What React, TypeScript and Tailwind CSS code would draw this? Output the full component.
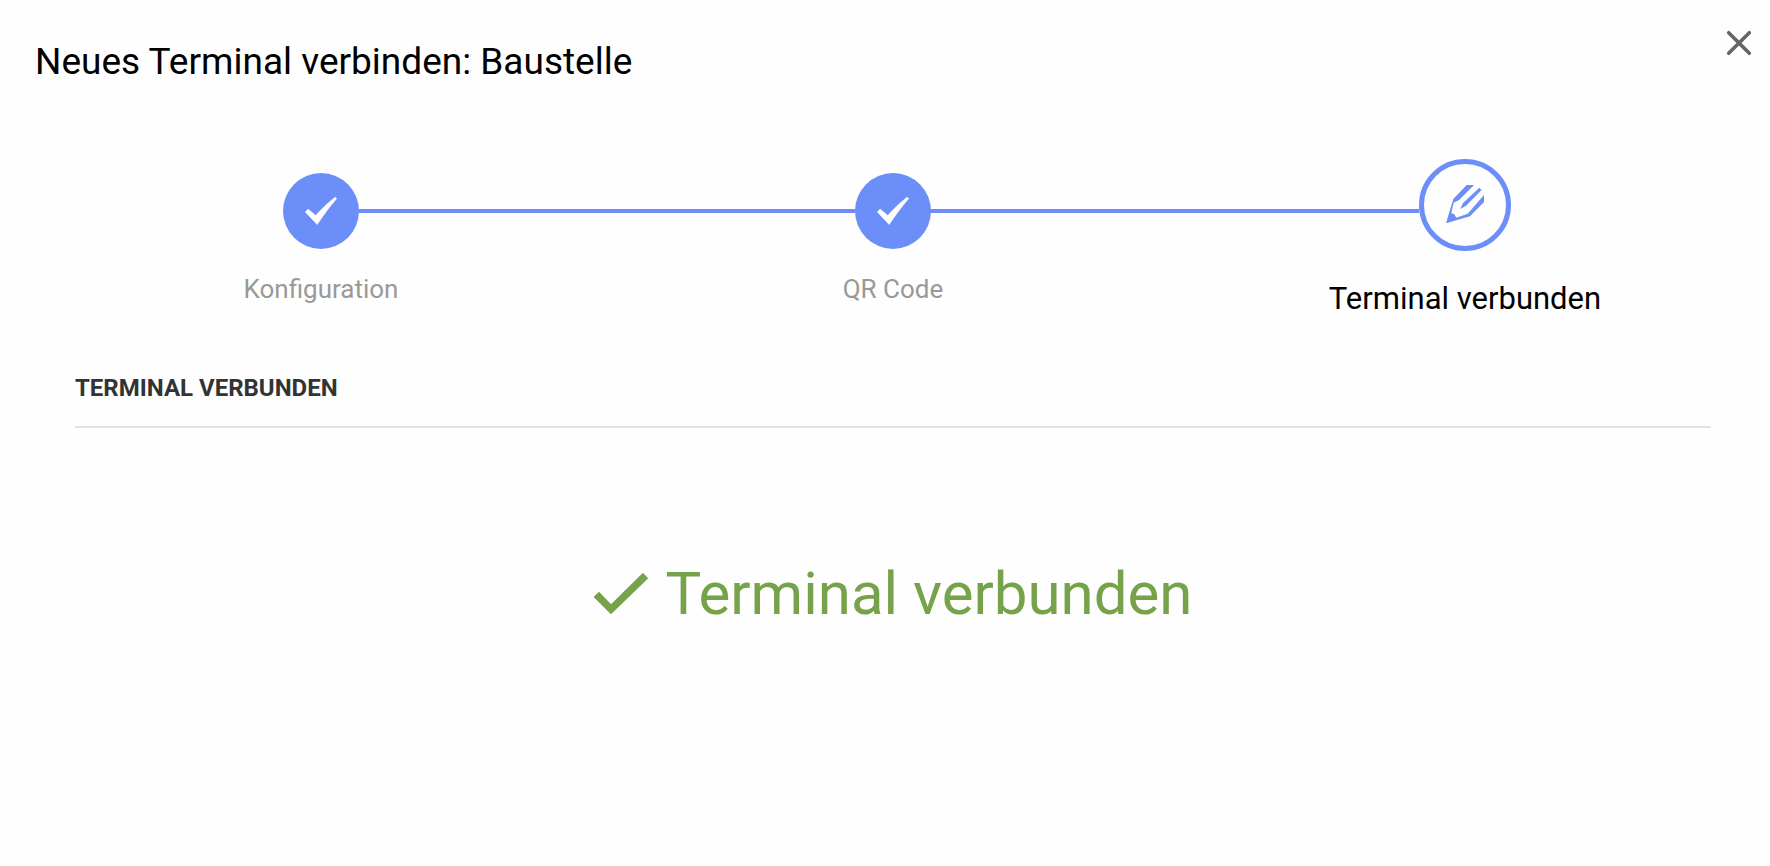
const steps = [
  { label: "Konfiguration", done: true },
  { label: "QR Code", done: true },
  { label: "Terminal verbunden", done: false },
];

function StepCheck() {
  return (
    <svg viewBox="0 0 76 76" className="size-full" fill="#fff" stroke="#fff" strokeWidth="0.6" strokeLinejoin="round" aria-hidden="true">
      <path d="M22.300 38.900L25.200 36.200L32.700 42.500C38.500 36 44.500 30 52.200 24.200L53.600 25.600C47 33.500 40.500 42 34.200 51.500Z" />
    </svg>
  );
}

function StepPencil() {
  return (
    <svg viewBox="0 0 48 48" className="size-12" fill="#6c8ef8" aria-hidden="true">
      <path d="M5 42.200L12.300 18L25.700 4H33L18 19L12.700 21.700L10.300 32L13.300 33.300L15.300 36.700L26.700 32.700L43 14V21L29 35.300Z" />
      <path d="M38.300 6.700L40.600 8.900L25 24.800L19.300 27.900L21.900 22.300Z" />
    </svg>
  );
}

export default function App() {
  return (
    <main className="min-h-screen bg-[#fefefe] font-['Roboto',sans-serif] text-black">
      <header className="flex items-start justify-between pt-7 pr-4 pl-[35px]">
        <h1 className="pt-2 text-[37px] leading-[52px]">Neues Terminal verbinden: Baustelle</h1>
        <button type="button" aria-label="Schließen" className="size-[30px]">
          <svg viewBox="0 0 30 30" className="size-full" stroke="#666" strokeWidth="3.600" strokeLinecap="round" aria-hidden="true">
            <path d="M4.700 4.700L25.300 25.300M25.300 4.700L4.700 25.300" />
          </svg>
        </button>
      </header>
      <div className="pr-[19px] pl-[35px]">
        <ol className="mt-[71px] grid grid-cols-3">
          {steps.map((step, i) => (
            <li key={step.label} className="flex flex-col items-center">
              <div className="flex h-[104px] w-full items-center">
                <span className={i === 0 ? "h-1 flex-1" : "h-1 flex-1 bg-[#6c8ef8]"} />
                {step.done ? (
                  <span className="size-[76px] rounded-full bg-[#6c8ef8]"><StepCheck /></span>
                ) : (
                  <span className="flex size-[92px] items-center justify-center self-start rounded-full border-[5px] border-[#6c8ef8]"><StepPencil /></span>
                )}
                <span className={i === 2 ? "h-1 flex-1" : "h-1 flex-1 bg-[#6c8ef8]"} />
              </div>
              <span className={step.done ? "mt-2 text-[26px] leading-9 text-[#999]" : "mt-[18px] text-[31px] leading-9"}>{step.label}</span>
            </li>
          ))}
        </ol>
        <section className="px-10 pt-[55px]">
          <h2 className="border-b-2 border-[#e2e2e2] pb-[22px] text-2xl leading-8 font-bold text-[#333] uppercase">Terminal verbunden</h2>
          <p className="flex items-center justify-center gap-4 pt-[130px] text-[60px] leading-[72px] text-[#76a24a]">
            <svg viewBox="0 0 56 44" className="h-11 w-14" fill="currentColor" stroke="currentColor" strokeWidth="1.500" strokeLinejoin="round" aria-hidden="true">
              <path d="M1.600 25L6 20.800L18 33.200L50 1.900L54.200 6.200L18 41.300Z" />
            </svg>
            Terminal verbunden
          </p>
        </section>
      </div>
    </main>
  );
}
